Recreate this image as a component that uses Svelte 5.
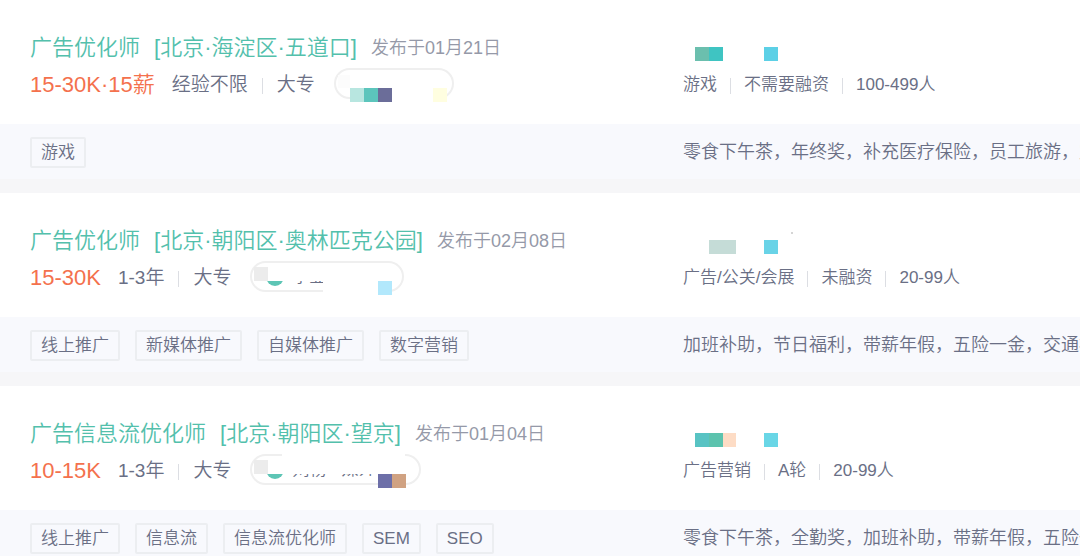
<script>
  const jobs = [
    {
      title: '广告优化师',
      area: '北京·海淀区·五道口',
      date: '01月21日',
      salary: '15-30K·15薪',
      experience: '经验不限',
      degree: '大专',
      tags: ['游戏'],
      recruiter: {
        name: '',
        width: 120,
        avatar: false,
        blocks: [
          { x: 16, y: 20, w: 94, h: 14, color: '#fff' },
          { x: 4, y: 7, w: 12, h: 13, color: '#fcfcfc' },
          { x: 16, y: 20, w: 14, h: 14, color: '#b8e6e0' },
          { x: 30, y: 20, w: 14, h: 14, color: '#5cc5bc' },
          { x: 44, y: 20, w: 14, h: 14, color: '#6b6d99' },
          { x: 99, y: 20, w: 14, h: 14, color: '#fffee0' }
        ]
      },
      logo: [
        { x: 12, y: 15, w: 14, h: 14, color: '#6bbfae' },
        { x: 26, y: 15, w: 14, h: 14, color: '#3fc4c2' },
        { x: 81, y: 15, w: 14, h: 14, color: '#5cd0e6' }
      ],
      company: ['游戏', '不需要融资', '100-499人'],
      welfare: ['零食下午茶', '年终奖', '补充医疗保险', '员工旅游', '定期体检']
    },
    {
      title: '广告优化师',
      area: '北京·朝阳区·奥林匹克公园',
      date: '02月08日',
      salary: '15-30K',
      experience: '1-3年',
      degree: '大专',
      tags: ['线上推广', '新媒体推广', '自媒体推广', '数字营销'],
      recruiter: {
        name: '李亚',
        width: 154,
        avatar: true,
        blocks: [
          { x: 16, y: 4, w: 124, h: 16, color: '#fff' },
          { x: 73, y: 20, w: 68, h: 12, color: '#fff' },
          { x: 38, y: 23, w: 40, h: 5, color: '#fff' },
          { x: 4, y: 6, w: 14, h: 14, color: '#ececec' },
          { x: 128, y: 20, w: 14, h: 14, color: '#b2e8fc' }
        ]
      },
      logo: [
        { x: 26, y: 15, w: 27, h: 14, color: '#c5dcd7' },
        { x: 81, y: 15, w: 14, h: 14, color: '#69d3e7' },
        { x: 108, y: 7, w: 2, h: 2, color: '#d5d5d5' }
      ],
      company: ['广告/公关/会展', '未融资', '20-99人'],
      welfare: ['加班补助', '节日福利', '带薪年假', '五险一金', '交通补助']
    },
    {
      title: '广告信息流优化师',
      area: '北京·朝阳区·望京',
      date: '01月04日',
      salary: '10-15K',
      experience: '1-3年',
      degree: '大专',
      tags: ['线上推广', '信息流', '信息流优化师', 'SEM', 'SEO'],
      recruiter: {
        name: '刘杨 · 媒介',
        width: 171,
        avatar: true,
        blocks: [
          { x: 32, y: 0, w: 123, h: 20, color: '#fff' },
          { x: 16, y: 4, w: 20, h: 16, color: '#fff' },
          { x: 38, y: 24, w: 90, h: 4, color: '#fff' },
          { x: 4, y: 6, w: 14, h: 14, color: '#ececec' },
          { x: 128, y: 20, w: 14, h: 14, color: '#6d6fa8' },
          { x: 142, y: 20, w: 14, h: 14, color: '#d0a282' }
        ]
      },
      logo: [
        { x: 12, y: 15, w: 14, h: 14, color: '#58c3c3' },
        { x: 26, y: 15, w: 14, h: 14, color: '#5cc3ae' },
        { x: 40, y: 15, w: 13, h: 14, color: '#fddcc5' },
        { x: 81, y: 15, w: 14, h: 14, color: '#69d6e6' }
      ],
      company: ['广告营销', 'A轮', '20-99人'],
      welfare: ['零食下午茶', '全勤奖', '加班补助', '带薪年假', '五险一金']
    }
  ];
</script>

{#snippet mosaic(blocks)}
  {#each blocks as b}
    <span
      class="block"
      style="left: {b.x}px; top: {b.y}px; width: {b.w}px; height: {b.h}px; background: {b.color}"
    ></span>
  {/each}
{/snippet}

<ul class="job-list">
  {#each jobs as job}
    <li class="job-card">
      <div class="card-body">
        <div class="job-info">
          <div class="job-title">
            <a href="#job" class="job-name">
              <span>{job.title}</span>
              <span>[{job.area}]</span>
            </a>
            <span class="job-date">发布于{job.date}</span>
          </div>
          <div class="job-limit">
            <span class="salary">{job.salary}</span>
            <span>{job.experience}</span>
            <i class="divider"></i>
            <span>{job.degree}</span>
            <button
              type="button"
              class="recruiter"
              aria-label="立即沟通"
              style="width: {job.recruiter.width}px"
            >
              {#if job.recruiter.avatar}
                <span class="avatar"></span>
              {/if}
              <span class="recruiter-name">{job.recruiter.name}</span>
              {@render mosaic(job.recruiter.blocks)}
            </button>
          </div>
        </div>
        <div class="company-info">
          <a href="#company" class="company-name" aria-label="公司">
            {@render mosaic(job.logo)}
          </a>
          <div class="company-desc">
            {#each job.company as item, i}
              {#if i > 0}<i class="divider"></i>{/if}
              <span>{item}</span>
            {/each}
          </div>
        </div>
      </div>
      <div class="card-footer">
        <div class="tags">
          {#each job.tags as tag}
            <span class="tag">{tag}</span>
          {/each}
        </div>
        <p class="welfare">{job.welfare.join('\uff0c')}</p>
      </div>
    </li>
  {/each}
</ul>

<style>
  :global(body) {
    margin: 0;
    background: #f6f6f8;
    overflow: hidden;
  }

  .job-list {
    display: flex;
    flex-direction: column;
    gap: 14px;
    margin: 0;
    padding: 0;
    list-style: none;
    font-family: 'Liberation Sans', 'Noto Sans CJK SC', sans-serif;
    font-weight: 350;
    color: #6a6f85;
    white-space: nowrap;
  }

  .job-card {
    background: #fff;
  }

  .card-body,
  .card-footer {
    display: grid;
    grid-template-columns: minmax(0, 653fr) minmax(0, 397fr);
    padding-left: 30px;
  }

  .card-body {
    padding-top: 32px;
    padding-bottom: 23px;
  }

  .job-info,
  .company-info {
    display: flex;
    flex-direction: column;
    gap: 4px;
  }

  .job-title,
  .job-name {
    display: flex;
    align-items: center;
    gap: 14px;
    height: 32px;
    line-height: 32px;
  }

  .job-name {
    font-size: 22px;
    color: #53c0ac;
    text-decoration: none;
  }

  .job-date {
    font-size: 18px;
    color: #9599a8;
  }

  .job-limit {
    display: flex;
    align-items: flex-start;
    height: 33px;
    font-size: 19px;
    line-height: 33px;
  }

  .salary {
    margin-right: 17px;
    font-size: 22px;
    color: #f4714d;
  }

  .divider {
    align-self: center;
    width: 1px;
    height: 16px;
    margin: 2px 14px 0;
    background: #dcdee3;
  }

  .recruiter {
    position: relative;
    display: flex;
    align-items: center;
    gap: 8px;
    box-sizing: border-box;
    height: 31px;
    margin-left: 19px;
    padding: 0 14px;
    border: 2px solid #efefef;
    border-radius: 16px;
    background: #fff;
    font: inherit;
    font-size: 17px;
    line-height: 27px;
    color: #6a6f85;
    cursor: pointer;
  }

  .avatar {
    width: 18px;
    height: 18px;
    border-radius: 50%;
    background: #5dc5b5;
  }

  .block {
    position: absolute;
  }

  /* blocks inside the pill are measured from its outer edge */
  .recruiter .block {
    margin: -2px;
  }

  .company-name {
    position: relative;
    height: 32px;
  }

  .company-desc {
    display: flex;
    align-items: center;
    font-size: 17px;
    line-height: 33px;
  }

  .company-desc .divider {
    margin: 2px 13px 0;
  }

  .card-footer {
    align-items: center;
    box-sizing: border-box;
    height: 55px;
    padding-top: 2px;
    background: #f8f9fd;
  }

  .tags {
    display: flex;
    gap: 15px;
  }

  .tag {
    padding: 0 9px;
    border: 2px solid #eceef1;
    border-radius: 2px;
    font-size: 17px;
    line-height: 27px;
  }

  .welfare {
    margin: 0;
    overflow: hidden;
    font-size: 18px;
    line-height: 27px;
  }
</style>
